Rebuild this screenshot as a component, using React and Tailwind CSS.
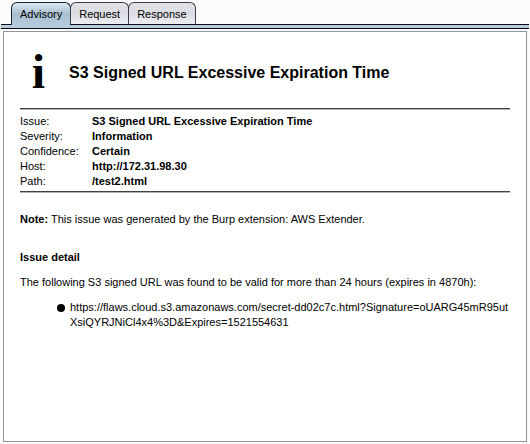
const tabs = ["Advisory", "Request", "Response"];

const facts = [
  ["Issue:", "S3 Signed URL Excessive Expiration Time"],
  ["Severity:", "Information"],
  ["Confidence:", "Certain"],
  ["Host:", "http://172.31.98.30"],
  ["Path:", "/test2.html"],
];

function Tab({ label, active }) {
  const look = active
    ? "border-[#15222f] bg-linear-to-b from-[#dce7ef] via-[#a9c0d0] to-[#b5cadd] -mb-px pb-px"
    : "border-[#3c3c46] bg-linear-to-b from-[#e2e3e9] via-[#dcdde3] to-[#eceef4]";
  return (
    <button
      type="button"
      role="tab"
      aria-selected={active}
      className={`-mr-px box-content h-[21px] rounded-t-md border border-b-0 px-2 text-[11px] leading-[22px] ${look}`}
    >
      {label}
    </button>
  );
}

function Rule() {
  return <hr className="h-0.5 border-0 border-t border-t-[#404040] bg-[#b4b4b4]" />;
}

export default function App() {
  return (
    <div className="flex min-h-screen flex-col bg-[#fbfbfc] pt-0.5 font-['Liberation_Sans',Arial,sans-serif] text-[11px] leading-[15px] text-black">
      <div role="tablist" aria-label="Issue views" className="relative flex pl-[11px]">
        {tabs.map((label, i) => (
          <Tab key={label} label={label} active={i === 0} />
        ))}
      </div>
      <div className="mx-px h-[5px] border-y border-[#0a0a18] bg-[#b5cadd]" />
      <main className="mx-[3px] mt-0.5 mb-0.5 grow border border-[#9292a0] bg-white px-4">
        <header className="flex h-[76px] items-center gap-3 pt-1.5">
          <span
            aria-hidden="true"
            className="w-[37px] pb-0.5 text-center font-['Liberation_Serif','Times_New_Roman',serif] text-[48px] leading-[46px] font-bold"
          >
            i
          </span>
          <h1 className="text-[16px] leading-5 font-bold">S3 Signed URL Excessive Expiration Time</h1>
        </header>
        <Rule />
        <table className="mt-1 mb-0.5">
          <tbody>
            {facts.map(([name, value]) => (
              <tr key={name}>
                <th scope="row" className="w-[72px] p-0 text-left font-normal">{name}</th>
                <td className="p-0 font-bold">{value}</td>
              </tr>
            ))}
          </tbody>
        </table>
        <Rule />
        <p className="mt-[19px]">
          <b>Note:</b> This issue was generated by the Burp extension: AWS Extender.
        </p>
        <h2 className="mt-[23px] font-bold">Issue detail</h2>
        <p className="mt-2.5">
          The following S3 signed URL was found to be valid for more than 24 hours (expires in 4870h):
        </p>
        <ul className="mt-2.5 pl-[37px]">
          <li className="flex gap-[5px]">
            <span aria-hidden="true" className="mt-1 size-2 shrink-0 rounded-full bg-black" />
            <span className="break-all">
              https://flaws.cloud.s3.amazonaws.com/secret-dd02c7c.html?Signature=oUARG45mR95utXsiQYRJNiCl4x4%3D&amp;Expires=1521554631
            </span>
          </li>
        </ul>
      </main>
    </div>
  );
}
